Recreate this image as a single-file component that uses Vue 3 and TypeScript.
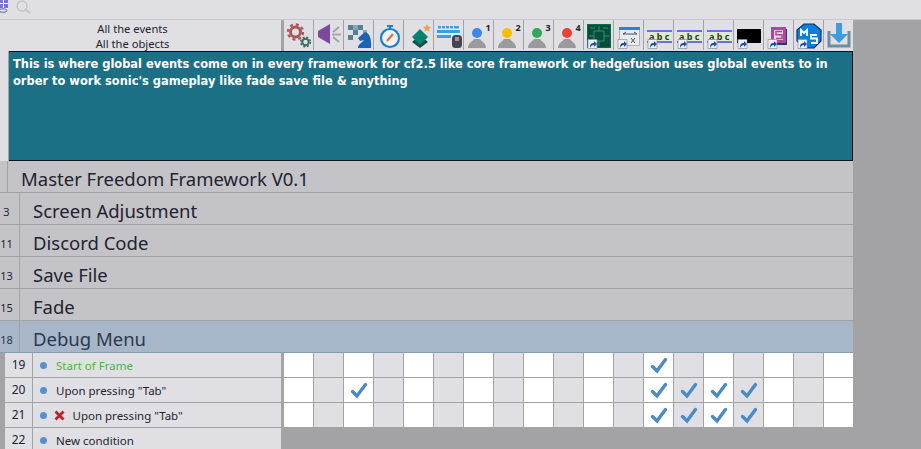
<template>
  <div class="editor">
    <div class="toolbar">
      <svg class="tool-logo" width="8" height="13" viewBox="0 0 8 13">
        <path d="M0 0h8v9H0z" fill="#fff" />
        <path d="M0 0h3v3H0zM4 0h4v3H4zM0 4h3v4H0zM4 4h4v4H4z" fill="#7a72d8" />
        <ellipse cx="3" cy="10.5" rx="4" ry="1.8" fill="none" stroke="#4a6f9c" />
      </svg>
      <svg class="search" width="16" height="14" viewBox="0 0 16 14">
        <circle cx="7" cy="6" r="5" fill="none" stroke="#c4c4c6" stroke-width="1.3" />
        <path d="M10.5 9.5l4.5 3.5" stroke="#c4c4c6" stroke-width="2" />
      </svg>
    </div>

    <div class="head">
      <div class="head-title">
        <div>All the events</div>
        <div>All the objects</div>
      </div>
      <div class="head-icons">
        <div v-for="icon in icons" :key="icon.id" class="head-icon">
          <svg class="head-svg" width="28" height="28" viewBox="0 0 28 28">
            <template v-if="icon.kind === 'gears'">
              <circle cx="10.5" cy="11" r="5" fill="none" stroke="#a65a5a" stroke-width="3" />
              <circle cx="10.5" cy="11" r="7.500" fill="none" stroke="#a65a5a" stroke-width="2.400" stroke-dasharray="3 2.900" />
              <circle cx="20.500" cy="21" r="3.200" fill="none" stroke="#3f6b5e" stroke-width="2" />
              <circle cx="20.500" cy="21" r="4.800" fill="none" stroke="#3f6b5e" stroke-width="1.600" stroke-dasharray="2 1.800" />
            </template>
            <template v-else-if="icon.kind === 'sound'">
              <path d="M3 10l12-7v20L3 16z" fill="#7a4a9c" />
              <path d="M24 6l-6 5M17 13.500h9M18 16l6 5" stroke="#a5a5a8" stroke-width="2" fill="none" />
            </template>
            <template v-else-if="icon.kind === 'board'">
              <path d="M3 4h5v5H3zM13 4h5v5h-5zM8 9h5v5H8zM3 14h5v5H3z" fill="#55809a" />
              <path d="M18 9h4v3h-4zM8 4h5v5H8z" fill="#8aa5b8" />
              <path d="M13 27c0-4 4-5 6-8l-4 1-2-3 7-6c4 1 7 6 6 16z" fill="#1b64b5" />
            </template>
            <template v-else-if="icon.kind === 'timer'">
              <circle cx="15" cy="17" r="9" fill="#f3f3f5" stroke="#1f7fc4" stroke-width="2.200" />
              <path d="M12 5h6M15 5v3" stroke="#1f7fc4" stroke-width="2.200" />
              <path d="M12 20l6-7" stroke="#e0703c" stroke-width="2.200" />
            </template>
            <template v-else-if="icon.kind === 'layers'">
              <path d="M7 21l8-7 8 7-8 6z" fill="#1d4d47" />
              <path d="M7 16l8-8 8 8-8 8z" fill="#00866f" />
              <path d="M22 3l1.200 2.600 2.800.3-2 2 .5 2.800-2.500-1.400-2.500 1.400.5-2.800-2-2 2.800-.3z" fill="#e2a25c" />
            </template>
            <template v-else-if="icon.kind === 'keyboard'">
              <path d="M2 5h24v12H2z" fill="#dcecf8" />
              <path d="M3 5h3v2.500H3zM7 5h3v2.500H7zM11 5h3v2.500h-3zM15 5h3v2.500h-3zM19 5h5v2.500h-5z" fill="#3b9ee8" />
              <path d="M2 9h23v3H2zM2 14h14v3H2z" fill="#3b9ee8" />
              <rect x="17" y="14" width="10" height="13" rx="3.500" fill="#45454d" />
              <path d="M20 16h4v4h-4z" fill="#a78ab8" />
            </template>
            <template v-else-if="icon.kind === 'player'">
              <circle cx="12" cy="12" r="5" :fill="icon.color" />
              <path d="M3 27c0-5 4-6 6-9h6c2 3 6 4 6 9z" fill="#9a9a9c" />
              <text x="20.500" y="10" class="player-num">{{ icon.num }}</text>
            </template>
            <template v-else-if="icon.kind === 'circuit'">
              <path d="M2 3h24v24H2z" fill="#0b6a4f" />
              <path d="M3 4h22v22H3z" fill="#0a4c3a" />
              <path d="M9 10h10v10H9zM5 7h5M18 7h5M14 5v5M14 20v5M4 15h5M19 15h5" fill="none" stroke="#1e9a70" />
            </template>
            <template v-else-if="icon.kind === 'formula'">
              <path d="M4.500 6.500h20v18h-20z" fill="#e8eaee" stroke="#aeb2b8" />
              <path d="M4 6h21v3H4z" fill="#2f7fd8" />
              <path d="M8 13h14M8 13l3-2M22 13l-3-2M16 17l4 5M20 17l-4 5" stroke="#40506a" fill="none" />
            </template>
            <template v-else-if="icon.kind === 'string'">
              <path d="M2 9h25v2H2zM2 20h25v2H2z" fill="#6e6edc" />
              <path d="M3 11h23v9H3z" fill="#dcecd0" />
              <text x="4" y="19" class="abc">a b c</text>
            </template>
            <template v-else-if="icon.kind === 'black'">
              <path d="M2 8h24v14H2z" fill="#000" />
            </template>
            <template v-else-if="icon.kind === 'script'">
              <path d="M8 8h14v16H8z" fill="#1f3d6e" />
              <path d="M6 6h15v16H6z" fill="#a84a98" />
              <path d="M9 9h9v10H9z" fill="#e6d5e6" />
              <path d="M17 10.500h-6v3.200h6v3.800h-6" fill="none" stroke="#a84a98" stroke-width="1.500" />
            </template>
            <template v-else-if="icon.kind === 'ms'">
              <path d="M9 3h10l7 6v11l-7 7H9l-7-7V9z" fill="#0a7fe0" stroke="#10306a" stroke-width="1.200" />
              <path d="M6 15V9l3 3 3-3v6" fill="none" stroke="#fff" stroke-width="1.800" />
              <path d="M22 14h-6v3.500h6V22h-6" fill="none" stroke="#fff" stroke-width="1.800" />
            </template>
            <template v-else-if="icon.kind === 'download'">
              <path d="M4 10v15h20V10" fill="none" stroke="#6b8ea0" stroke-width="3" />
              <path d="M11 2h6v11h6l-9 9-9-9h6z" fill="#3f9be0" />
            </template>
            <g v-if="icon.shortcut">
              <path d="M3 18.500h9v9H3z" fill="#eef0f6" stroke="#8a8e98" stroke-width=".7" />
              <path d="M5 27c0-4 1-5 4-5v-2l3 3-3 3v-2c-2 0-3 1-4 3z" fill="#1b4fa8" />
            </g>
          </svg>
        </div>
      </div>
    </div>

    <div class="comment-row">
      <div class="gutter-narrow"></div>
      <div class="comment">
        This is where global events come on in every framework for cf2.5 like core framework or hedgefusion uses global events to in<br />
        orber to work sonic's gameplay like fade save file &amp; anything
      </div>
    </div>

    <div class="group">
      <div class="group-num narrow"></div>
      <div class="group-name">Master Freedom Framework V0.1</div>
    </div>
    <div
      v-for="group in groups"
      :key="group.num"
      class="group"
      :class="{ selected: group.selected }"
    >
      <div class="group-num">{{ group.num }}</div>
      <div class="group-name">{{ group.name }}</div>
    </div>

    <div v-for="row in rows" :key="row.num" class="row">
      <div class="row-label">
        <div class="row-num">{{ row.num }}</div>
        <div class="row-text" :class="{ green: row.green }">
          <span class="dot"></span>
          <svg v-if="row.negated" class="cross" width="11" height="11" viewBox="0 0 11 11">
            <path d="M1.500 1.500l8 8M9.500 1.500l-8 8" stroke="#b8232f" stroke-width="2.800" />
          </svg>
          <span>{{ row.text }}</span>
        </div>
      </div>
      <div v-if="row.cells" class="cells">
        <div v-for="col in 19" :key="col" class="cell" :class="{ alt: col % 2 === 0 }">
          <svg v-if="row.cells.includes(col)" width="18" height="17" viewBox="0 0 18 17">
            <path d="M2.500 9.500l4.500 4.500 8.500-11.500" fill="none" stroke="#4a8acb" stroke-width="3.400" stroke-linecap="round" />
          </svg>
        </div>
      </div>
    </div>
  </div>
</template>

<script setup lang="ts">
interface HeadIcon {
  id: number
  kind: string
  color?: string
  num?: number
  shortcut?: boolean
}

interface EventRow {
  num: number
  text: string
  green?: boolean
  negated?: boolean
  cells?: number[]
}

const icons: HeadIcon[] = [
  { id: 1, kind: 'gears' },
  { id: 2, kind: 'sound' },
  { id: 3, kind: 'board' },
  { id: 4, kind: 'timer' },
  { id: 5, kind: 'layers' },
  { id: 6, kind: 'keyboard' },
  { id: 7, kind: 'player', color: '#3f86ee', num: 1 },
  { id: 8, kind: 'player', color: '#fbbc05', num: 2 },
  { id: 9, kind: 'player', color: '#34a853', num: 3 },
  { id: 10, kind: 'player', color: '#ea4335', num: 4 },
  { id: 11, kind: 'circuit', shortcut: true },
  { id: 12, kind: 'formula', shortcut: true },
  { id: 13, kind: 'string', shortcut: true },
  { id: 14, kind: 'string', shortcut: true },
  { id: 15, kind: 'string', shortcut: true },
  { id: 16, kind: 'black', shortcut: true },
  { id: 17, kind: 'script', shortcut: true },
  { id: 18, kind: 'ms', shortcut: true },
  { id: 19, kind: 'download' },
]

const groups = [
  { num: 3, name: 'Screen Adjustment' },
  { num: 11, name: 'Discord Code' },
  { num: 13, name: 'Save File' },
  { num: 15, name: 'Fade' },
  { num: 18, name: 'Debug Menu', selected: true },
]

const rows: EventRow[] = [
  { num: 19, text: 'Start of Frame', green: true, cells: [13] },
  { num: 20, text: 'Upon pressing "Tab"', cells: [3, 13, 14, 15, 16] },
  { num: 21, text: 'Upon pressing "Tab"', negated: true, cells: [13, 14, 15, 16] },
  { num: 22, text: 'New condition' },
]
</script>

<style>
html,
body {
  margin: 0;
  height: 100%;
  overflow: hidden;
  background: #a3a3a5;
}
</style>

<style scoped>
.editor {
  width: 921px;
  height: 449px;
  overflow: hidden;
  background: #a3a3a5;
  font-family: "Noto Sans", "Open Sans", sans-serif;
  color: #1f2430;
}

.toolbar {
  height: 19px;
  display: flex;
  align-items: flex-start;
  gap: 7px;
  background: #e0dfe4;
  border-bottom: 1px solid #c8c8cb;
}

.head {
  width: 853px;
  height: 31px;
  display: flex;
  background: #e0dfe4;
}

.head-title {
  width: 281px;
  flex: none;
  box-sizing: border-box;
  padding: 1px 16px 0 0;
  text-align: center;
  font-size: 11.2px;
  line-height: 15px;
}

.head-icons {
  display: flex;
  border-left: 3px solid #a3a3a5;
}

.head-icon {
  width: 30px;
  height: 30px;
  box-sizing: border-box;
  border-right: 1px solid #a3a3a5;
  padding: 1px 0 0 1px;
}

.head-svg {
  overflow: visible;
}

.player-num {
  font-size: 9px;
  font-weight: 700;
  fill: #222;
}

.abc {
  font-size: 9px;
  font-weight: 700;
  fill: #2c3a22;
}

.comment-row {
  width: 853px;
  height: 110px;
  display: flex;
  background: #e0dfe4;
}

.gutter-narrow {
  width: 8px;
  flex: none;
  border-right: 1px solid #a3a3a5;
}

.comment {
  flex: 1;
  box-sizing: border-box;
  background: #1b7086;
  border-top: 1px solid #111;
  border-bottom: 1px solid #111;
  border-right: 1px solid #111;
  padding: 4px 4px;
  color: #fff;
  font-family: "DejaVu Sans", sans-serif;
  font-size: 11.45px;
  font-weight: 700;
  line-height: 17px;
  white-space: nowrap;
}

.group {
  width: 853px;
  height: 32px;
  box-sizing: border-box;
  display: flex;
  background: #c4c3c8;
  border-bottom: 1px solid #a3a3a5;
}

.group.selected {
  background: #a8b6c9;
  border-bottom-color: #8a9cb2;
  color: #2b3a50;
}

.group-num {
  width: 20px;
  flex: none;
  box-sizing: border-box;
  border-right: 1px solid #a3a3a5;
  padding: 5px 6px 0 0;
  font-size: 11px;
  display: flex;
  align-items: center;
  justify-content: center;
}

.group-num.narrow {
  width: 8px;
  padding: 0;
}

.group-name {
  padding: 5px 0 0 13px;
  font-size: 18.5px;
  line-height: 26px;
}

.row {
  height: 25px;
  display: flex;
}

.row-label {
  width: 276px;
  height: 24px;
  margin-left: 5px;
  flex: none;
  display: flex;
  background: #e0dfe4;
}

.row-num {
  width: 28px;
  flex: none;
  box-sizing: border-box;
  border-right: 1px solid #a3a3a5;
  text-align: center;
  font-size: 12px;
  line-height: 24px;
}

.row-text {
  display: flex;
  align-items: center;
  font-size: 11.5px;
}

.row-text.green {
  color: #5aab4b;
}

.dot {
  width: 7px;
  height: 7px;
  margin: 0 9px 0 7px;
  border-radius: 50%;
  background: #5a8fce;
}

.cross {
  margin: 0 7.5px 0 -2px;
}

.cells {
  display: flex;
  margin-left: 3px;
}

.cell {
  width: 30px;
  height: 25px;
  box-sizing: border-box;
  display: flex;
  align-items: center;
  justify-content: center;
  background: #fff;
  border-right: 1px solid #a3a3a5;
  border-bottom: 1px solid #a3a3a5;
}

.cell.alt {
  background: #e0dfe4;
}

.cell:last-child {
  width: 29px;
  border-right: 0;
}
</style>
